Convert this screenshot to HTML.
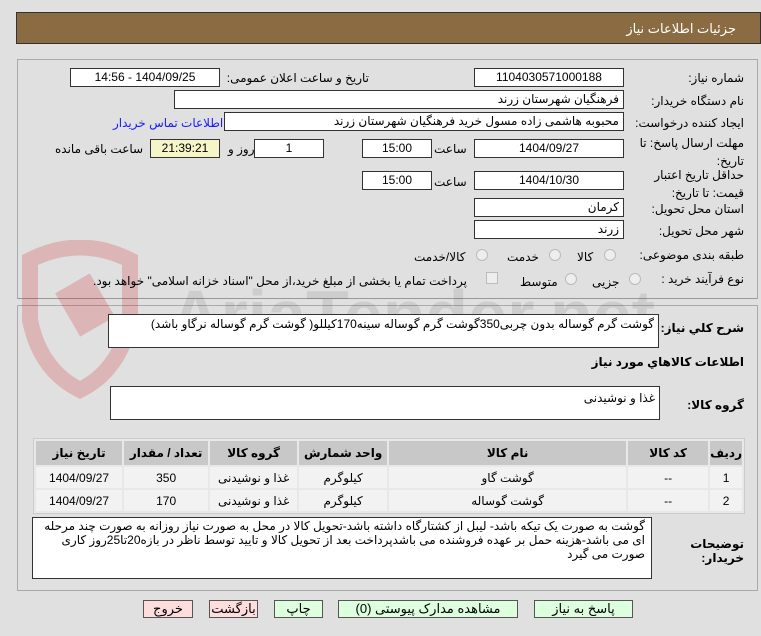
<!DOCTYPE html>
<html><head><meta charset="utf-8"><style>
*{box-sizing:border-box;margin:0;padding:0}
body{width:761px;height:636px;background:#e0e0e0;font-family:"Liberation Sans","DejaVu Sans",sans-serif;font-size:12px;color:#000;position:relative;overflow:hidden;direction:rtl}
.a{position:absolute;white-space:nowrap}
.f{position:absolute;background:#fff;border:1px solid #333;height:19px;line-height:17px;padding:0 4px;text-align:center;direction:rtl}
.fr{text-align:right}
.l{position:absolute;white-space:nowrap;text-align:right}
.rad{position:absolute;width:12px;height:12px;border:1px solid #bbb;border-radius:50%;background:#eee}
table{position:absolute;left:33px;top:438px;width:712px;border-collapse:separate;border-spacing:2px;background:#e8e8e8;border:1px solid #ccc}
td,th{text-align:center;height:21px;font-size:12px}
th{background:#c8c8c8;height:24px}
td{background:#f2f2f2}
.btn{position:absolute;top:600px;height:18px;border:1px solid #555;text-align:center;line-height:16px;font-size:13px}
</style></head><body>
<div class="a" style="left:16px;top:12px;width:745px;height:32px;background:#8b6c42;border:1px solid #333"></div>
<div class="a" style="right:25px;top:21px;color:#fff;font-size:13px">جزئیات اطلاعات نیاز</div>
<div class="a" style="left:17px;top:59px;width:741px;height:240px;border:1px solid #aaa;border-bottom-color:#999"></div>
<div class="a" style="left:17px;top:305px;width:741px;height:286px;border:1px solid #aaa"></div>
<svg class="a" style="left:20px;top:240px;opacity:.18" width="120" height="160" viewBox="0 0 120 160"><path d="M10 20 Q60 -5 110 20 L110 80 Q100 130 60 150 Q20 130 10 80Z" fill="none" stroke="#c00" stroke-width="16"/><rect x="45" y="40" width="40" height="50" fill="#c00" transform="rotate(-30 65 65)"/></svg>
<div class="a" style="left:170px;top:275px;font-size:70px;font-weight:bold;color:#000;opacity:.08;direction:ltr">AriaTender.net</div>

<div class="l" style="right:17px;top:71px">شماره نیاز:</div>
<div class="f" style="left:474px;top:68px;width:150px">1104030571000188</div>
<div class="l" style="right:392px;top:71px">تاریخ و ساعت اعلان عمومی:</div>
<div class="f" style="left:70px;top:68px;width:150px">1404/09/25 - 14:56</div>

<div class="l" style="right:17px;top:94px">نام دستگاه خریدار:</div>
<div class="f fr" style="left:174px;top:90px;width:450px">فرهنگیان شهرستان زرند</div>

<div class="l" style="right:17px;top:116px">ایجاد کننده درخواست:</div>
<div class="f fr" style="left:224px;top:112px;width:400px">محبوبه هاشمی زاده مسول خرید فرهنگیان شهرستان زرند</div>
<div class="l" style="left:113px;top:116px;color:#1a1aff">اطلاعات تماس خریدار</div>

<div class="l" style="right:17px;top:136px">مهلت ارسال پاسخ: تا</div>
<div class="l" style="right:17px;top:154px">تاریخ:</div>
<div class="f" style="left:474px;top:139px;width:150px">1404/09/27</div>
<div class="l" style="left:434px;top:142px">ساعت</div>
<div class="f" style="left:362px;top:139px;width:70px">15:00</div>
<div class="f" style="left:254px;top:139px;width:70px">1</div>
<div class="l" style="left:228px;top:142px">روز و</div>
<div class="f" style="left:150px;top:139px;width:70px;background:#f5f5c8">21:39:21</div>
<div class="l" style="left:55px;top:142px">ساعت باقی مانده</div>

<div class="l" style="right:17px;top:168px">حداقل تاریخ اعتبار</div>
<div class="l" style="right:17px;top:186px">قیمت: تا تاریخ:</div>
<div class="f" style="left:474px;top:171px;width:150px">1404/10/30</div>
<div class="l" style="left:434px;top:175px">ساعت</div>
<div class="f" style="left:362px;top:171px;width:70px">15:00</div>

<div class="l" style="right:17px;top:202px">استان محل تحویل:</div>
<div class="f fr" style="left:474px;top:198px;width:150px">کرمان</div>
<div class="l" style="right:17px;top:224px">شهر محل تحویل:</div>
<div class="f fr" style="left:474px;top:220px;width:150px">زرند</div>

<div class="l" style="right:17px;top:248px">طبقه بندی موضوعی:</div>
<div class="rad" style="left:604px;top:249px"></div><div class="l" style="left:577px;top:250px">کالا</div>
<div class="rad" style="left:549px;top:249px"></div><div class="l" style="left:507px;top:250px">خدمت</div>
<div class="rad" style="left:476px;top:249px"></div><div class="l" style="left:414px;top:250px">کالا/خدمت</div>

<div class="l" style="right:17px;top:272px">نوع فرآیند خرید :</div>
<div class="rad" style="left:629px;top:273px"></div><div class="l" style="left:592px;top:275px">جزیی</div>
<div class="rad" style="left:565px;top:273px"></div><div class="l" style="left:520px;top:275px">متوسط</div>
<div class="a" style="left:486px;top:272px;width:12px;height:12px;border:1px solid #bbb;background:#eee"></div>
<div class="l" style="left:93px;top:274px">پرداخت تمام یا بخشی از مبلغ خرید،از محل "اسناد خزانه اسلامی" خواهد بود.</div>

<div class="l" style="right:17px;top:321px;font-weight:bold">شرح كلي نياز:</div>
<div class="f fr" style="left:108px;top:314px;width:551px;height:34px;text-align:right;line-height:18px">گوشت گرم گوساله بدون چربی350گوشت گرم گوساله سینه170کیللو( گوشت گرم گوساله نرگاو باشد)</div>
<div class="l" style="right:17px;top:355px;font-weight:bold">اطلاعات کالاهاي مورد نياز</div>
<div class="l" style="right:17px;top:398px;font-weight:bold">گروه کالا:</div>
<div class="f fr" style="left:110px;top:386px;width:550px;height:34px;line-height:22px">غذا و نوشیدنی</div>

<table><tr><th style="width:28px">رديف</th><th style="width:80px">کد کالا</th><th style="width:237px">نام کالا</th><th style="width:88px">واحد شمارش</th><th style="width:87px">گروه کالا</th><th style="width:84px">تعداد / مقدار</th><th>تاريخ نياز</th></tr>
<tr><td>1</td><td>--</td><td>گوشت گاو</td><td>کیلوگرم</td><td>غذا و نوشیدنی</td><td>350</td><td>1404/09/27</td></tr>
<tr><td>2</td><td>--</td><td>گوشت گوساله</td><td>کیلوگرم</td><td>غذا و نوشیدنی</td><td>170</td><td>1404/09/27</td></tr></table>

<div class="l" style="right:17px;top:537px;font-weight:bold;text-align:right">توضیحات<br>خریدار:</div>
<div class="a" style="left:32px;top:517px;width:620px;height:62px;background:#fff;border:1px solid #333;white-space:normal;text-align:right;padding:1px 6px;line-height:14px;font-size:12px">گوشت به صورت یک تیکه باشد- لیبل از کشتارگاه داشته باشد-تحویل کالا در محل به صورت نیاز روزانه به صورت چند مرحله ای می باشد-هزینه حمل بر عهده فروشنده می باشدپرداخت بعد از تحویل کالا و تایید توسط ناظر در بازه20تا25روز کاری صورت می گیرد</div>

<div class="btn" style="left:143px;width:50px;background:#fdd">خروج</div>
<div class="btn" style="left:209px;width:49px;background:#fdd">بازگشت</div>
<div class="btn" style="left:274px;width:49px;background:#dfd">چاپ</div>
<div class="btn" style="left:338px;width:180px;background:#dfd">مشاهده مدارک پیوستی (0)</div>
<div class="btn" style="left:534px;width:99px;background:#dfd">پاسخ به نیاز</div>
</body></html>
